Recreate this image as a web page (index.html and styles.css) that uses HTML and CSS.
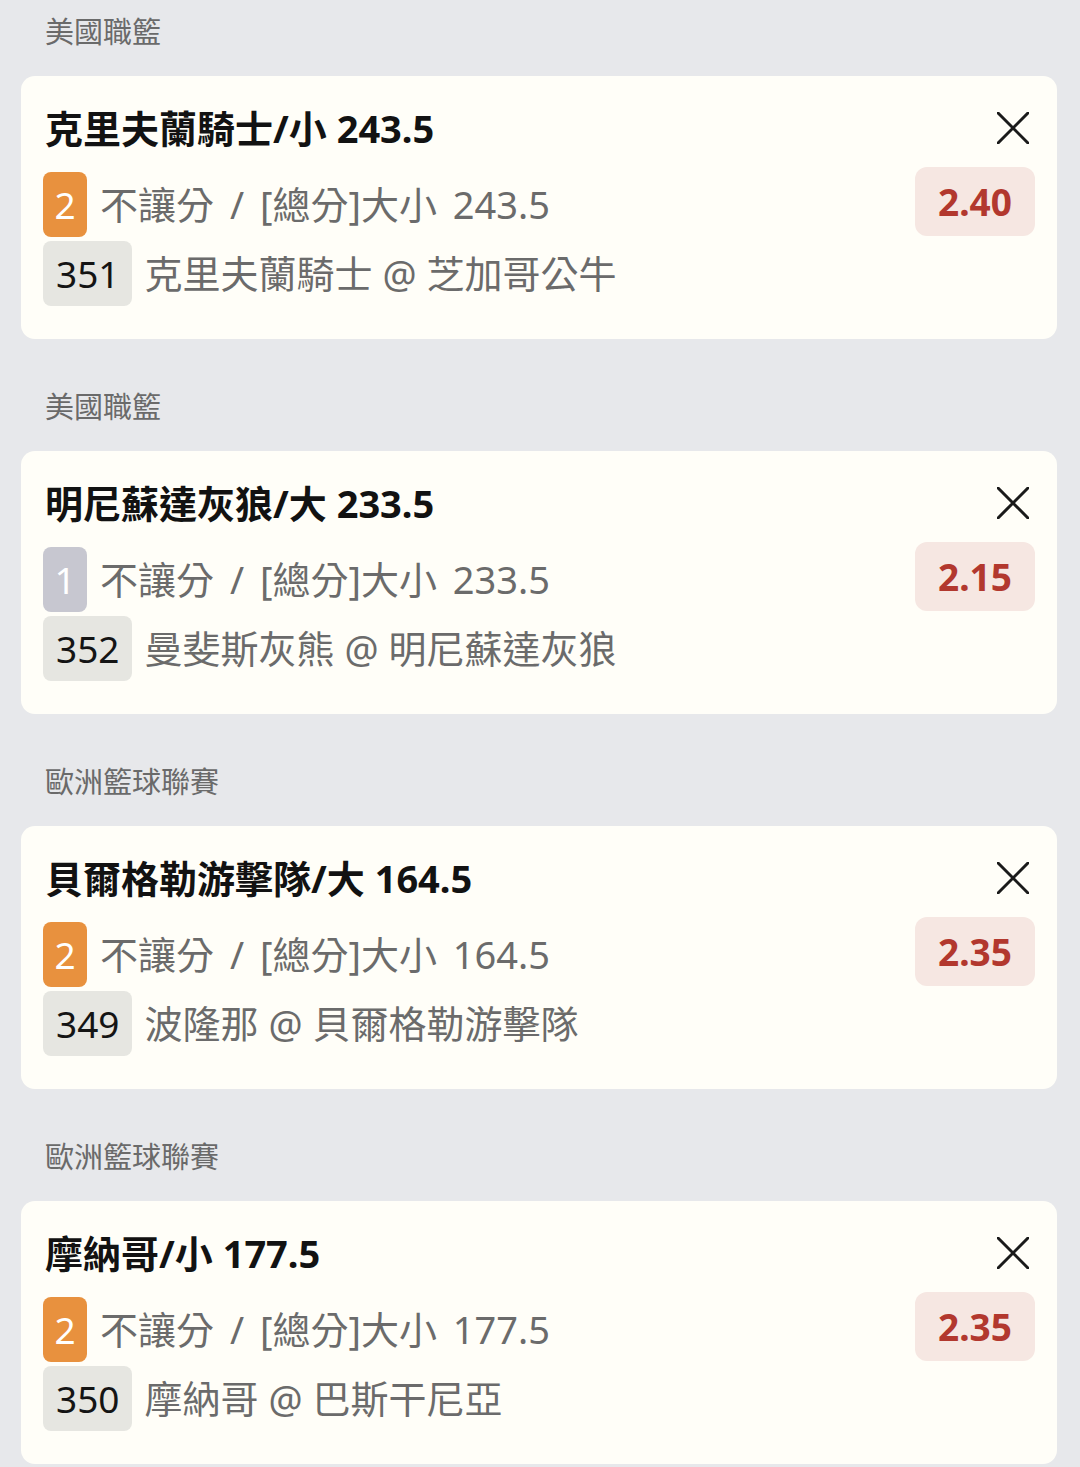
FILE: index.html
```html
<!DOCTYPE html>
<html lang="zh-Hant">
<head>
<meta charset="utf-8">
<link rel="stylesheet" href="styles.css">
</head>
<body>
<div class="list">
  <section class="section">
    <div class="league">美國職籃</div>
    <div class="card">
      <div class="head">
        <div class="title">克里夫蘭騎士/小 243.5</div>
        <svg class="close" viewBox="0 0 32 32"><path d="M1 1L31 31M31 1L1 31"/></svg>
      </div>
      <div class="body">
        <div class="rows">
          <div class="row"><span class="pos orange">2</span><span class="txt bet">不讓分 / [總分]大小 243.5</span></div>
          <div class="row"><span class="num">351</span><span class="txt">克里夫蘭騎士 @ 芝加哥公牛</span></div>
        </div>
        <div class="odds">2.40</div>
      </div>
    </div>
  </section>
  <section class="section">
    <div class="league">美國職籃</div>
    <div class="card">
      <div class="head">
        <div class="title">明尼蘇達灰狼/大 233.5</div>
        <svg class="close" viewBox="0 0 32 32"><path d="M1 1L31 31M31 1L1 31"/></svg>
      </div>
      <div class="body">
        <div class="rows">
          <div class="row"><span class="pos grey">1</span><span class="txt bet">不讓分 / [總分]大小 233.5</span></div>
          <div class="row"><span class="num">352</span><span class="txt">曼斐斯灰熊 @ 明尼蘇達灰狼</span></div>
        </div>
        <div class="odds">2.15</div>
      </div>
    </div>
  </section>
  <section class="section">
    <div class="league">歐洲籃球聯賽</div>
    <div class="card">
      <div class="head">
        <div class="title">貝爾格勒游擊隊/大 164.5</div>
        <svg class="close" viewBox="0 0 32 32"><path d="M1 1L31 31M31 1L1 31"/></svg>
      </div>
      <div class="body">
        <div class="rows">
          <div class="row"><span class="pos orange">2</span><span class="txt bet">不讓分 / [總分]大小 164.5</span></div>
          <div class="row"><span class="num">349</span><span class="txt">波隆那 @ 貝爾格勒游擊隊</span></div>
        </div>
        <div class="odds">2.35</div>
      </div>
    </div>
  </section>
  <section class="section">
    <div class="league">歐洲籃球聯賽</div>
    <div class="card">
      <div class="head">
        <div class="title">摩納哥/小 177.5</div>
        <svg class="close" viewBox="0 0 32 32"><path d="M1 1L31 31M31 1L1 31"/></svg>
      </div>
      <div class="body">
        <div class="rows">
          <div class="row"><span class="pos orange">2</span><span class="txt bet">不讓分 / [總分]大小 177.5</span></div>
          <div class="row"><span class="num">350</span><span class="txt">摩納哥 @ 巴斯干尼亞</span></div>
        </div>
        <div class="odds">2.35</div>
      </div>
    </div>
  </section>
</div>
</body>
</html>
```
FILE: styles.css
```css
* { box-sizing: border-box; }
html, body {
  margin: 0;
  padding: 0;
  background: #e7e8eb;
}
body {
  font-family: "Noto Sans", "Noto Sans CJK TC", sans-serif;
  width: 1080px;
  height: 1467px;
  overflow: hidden;
}
.list {
  padding: 0 23px 0 21px;
  display: flex;
  flex-direction: column;
  gap: 36px;
}
.league {
  padding-top: 14px;
  height: 76px;
  line-height: 36px;
  font-size: 29px;
  color: #6a6a6a;
  padding-left: 24px;
}
.card {
  background: #fffef8;
  border-radius: 14px;
  padding: 32px 22px 33px 22px;
  height: 263px;
}
.head {
  height: 40px;
  display: flex;
  align-items: center;
  justify-content: space-between;
}
.title {
  font-size: 38px;
  font-weight: 700;
  line-height: 40px;
  color: #121212;
  padding-left: 2px;
}
.close {
  width: 32px;
  height: 32px;
  margin-right: 6px;
  fill: none;
  stroke: #1a1a1a;
  stroke-width: 3;
  stroke-linecap: round;
}
.body {
  margin-top: 20px;
  display: flex;
  justify-content: space-between;
  align-items: flex-start;
}
.rows {
  padding-top: 4px;
  display: flex;
  flex-direction: column;
  gap: 4px;
}
.row {
  display: flex;
  align-items: center;
  height: 65px;
  gap: 13px;
}
.txt {
  font-size: 38px;
  color: #6b6b6b;
  line-height: 65px;
  white-space: nowrap;
}
.txt.bet {
  word-spacing: 6px;
}
.pos {
  width: 44px;
  height: 65px;
  border-radius: 8px;
  color: #fff;
  font-size: 37px;
  line-height: 65px;
  text-align: center;
}
.orange { background: #e8913e; }
.grey { background: #c7c7d0; }
.num {
  height: 65px;
  padding: 0 12px 0 13px;
  border-radius: 8px;
  background: #e6e6e1;
  color: #141414;
  font-size: 37px;
  line-height: 65px;
}
.odds {
  width: 120px;
  height: 69px;
  border-radius: 12px;
  background: #f6e7e2;
  color: #b2382e;
  font-size: 37px;
  font-weight: 700;
  line-height: 69px;
  text-align: center;
  margin-top: -1px;
}
```
